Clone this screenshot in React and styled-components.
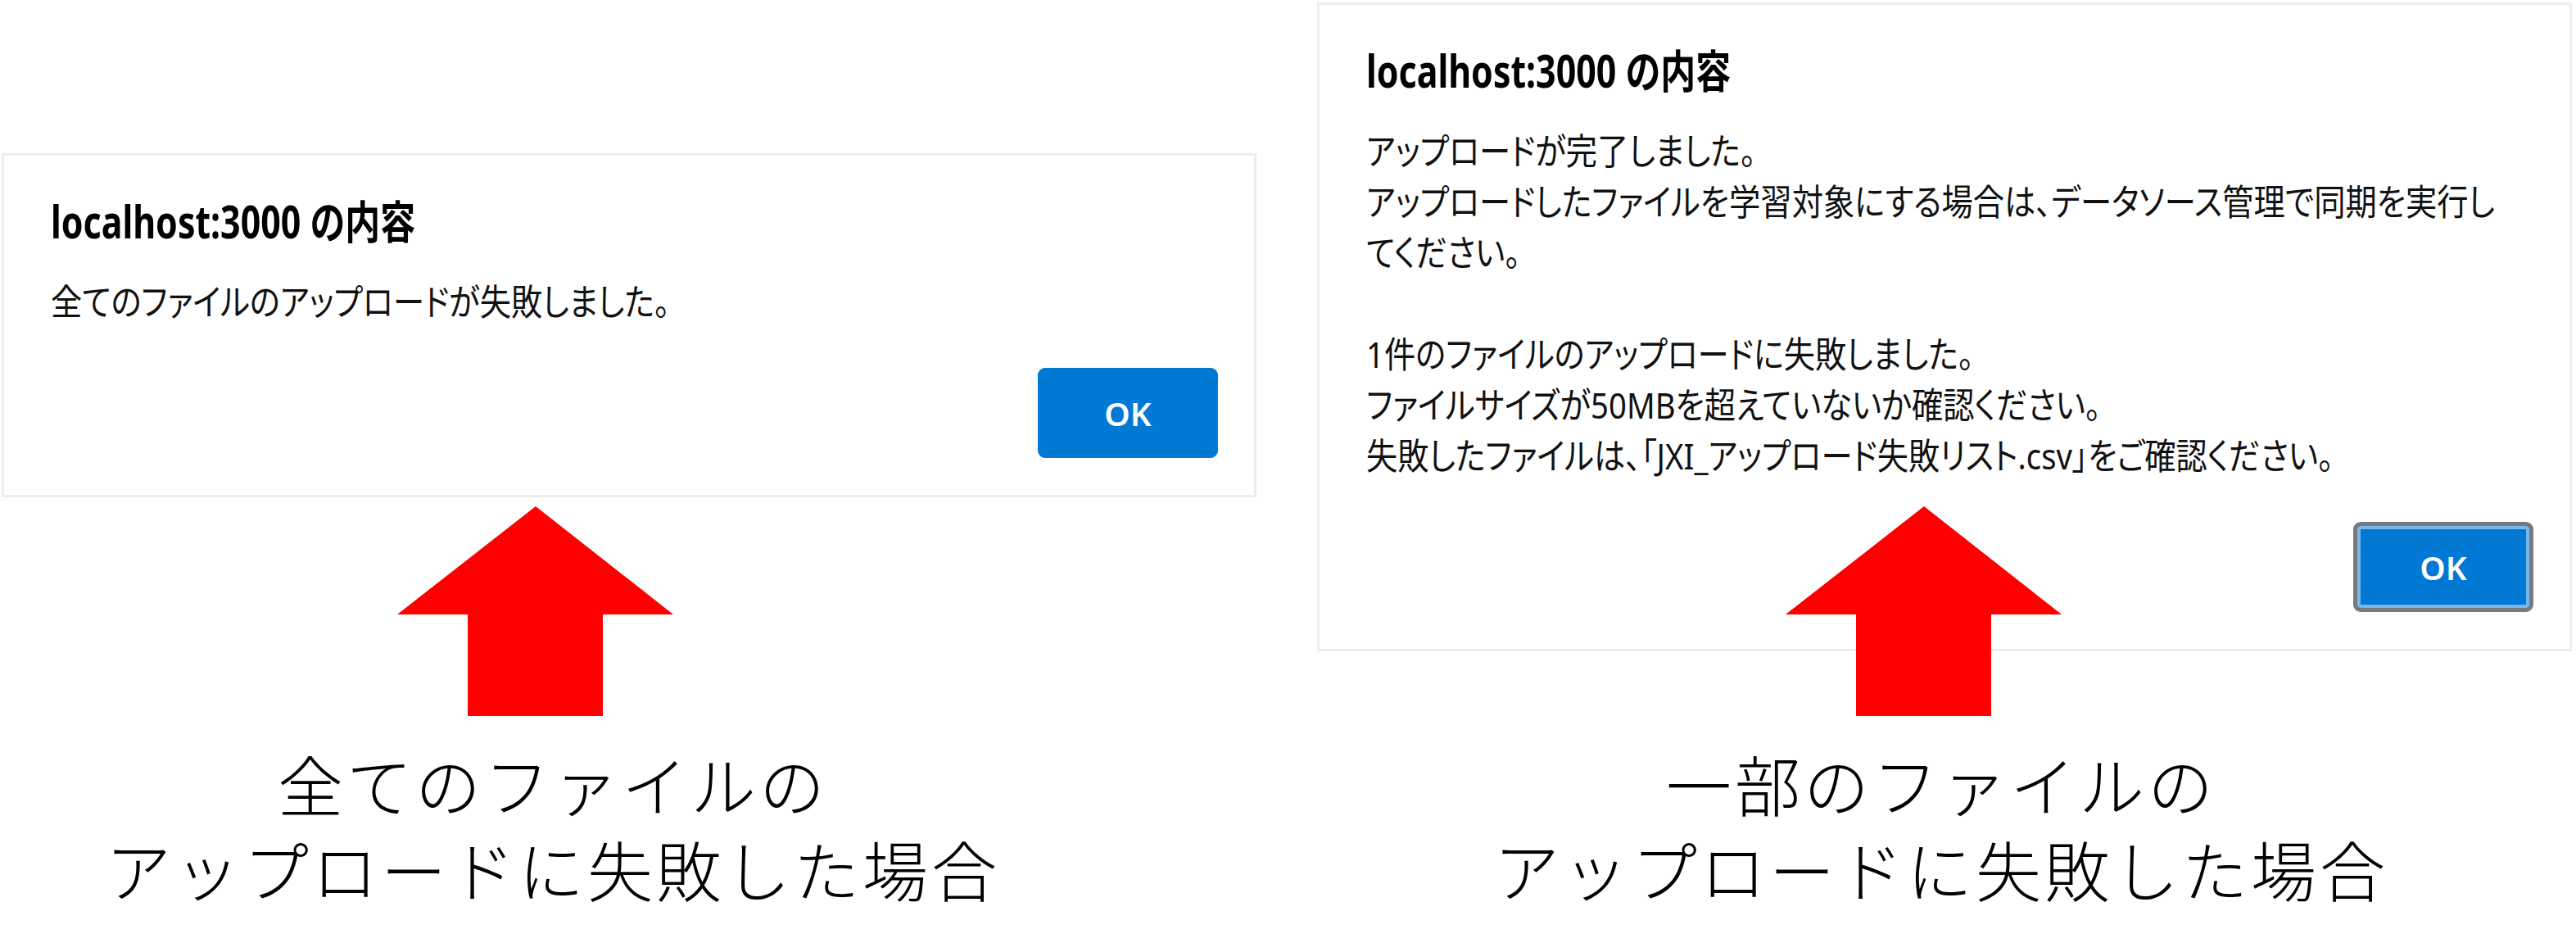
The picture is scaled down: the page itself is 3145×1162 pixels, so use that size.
import React from 'react';
import styled, { createGlobalStyle } from 'styled-components';

const GlobalStyle = createGlobalStyle`
  html, body { margin: 0; padding: 0; background: #ffffff; }
  body { font-family: "Noto Sans", "Noto Sans CJK JP", sans-serif; }
`;

const Page = styled.main`
  display: grid;
  grid-template-columns: 1532px 1532px;
  grid-template-rows: 618px auto;
  column-gap: 74px;
  padding-left: 2px;
  width: 3145px;
  box-sizing: border-box;
`;

const Dialog = styled.section`
  grid-column: ${(p) => p.$col};
  grid-row: ${(p) => (p.$span ? '1 / span 2' : '1')};
  align-self: start;
  margin-top: ${(p) => p.$top}px;
  box-sizing: border-box;
  border: 3px solid #ededed;
  background: #ffffff;
  padding: 44px 44px 45px 57px;
  display: flex;
  flex-direction: column;
`;

const Title = styled.h2`
  margin: 0;
  font-family: "Noto Sans", "Noto Sans CJK JP", sans-serif;
  font-size: 55px;
  font-weight: 700;
  line-height: 71px;
  color: #000000;
  white-space: nowrap;
  transform: scaleX(0.78);
  transform-origin: left center;
`;

const Message = styled.div`
  margin-top: 32px;
  display: flex;
  flex-direction: column;
`;

const Line = styled.div`
  font-family: "Noto Sans", "Noto Sans CJK JP", sans-serif;
  font-size: 44px;
  line-height: 62px;
  height: 62px;
  color: #111111;
  white-space: nowrap;
  font-feature-settings: "palt" 1;
  transform: scaleX(0.87);
  transform-origin: left center;
`;

const ButtonRow = styled.div`
  display: flex;
  justify-content: flex-end;
  margin-top: 50px;
`;

const OkButton = styled.button`
  width: 220px;
  height: 110px;
  box-sizing: border-box;
  border-radius: 9px;
  background: #0078d4;
  color: #ffffff;
  font-family: "Noto Sans", sans-serif;
  font-size: 40px;
  font-weight: 600;
  cursor: pointer;
  border: ${(p) => (p.$focused ? '5px solid #767a7e' : 'none')};
  box-shadow: ${(p) => (p.$focused ? 'inset 0 0 0 4px #78b6ee' : 'none')};
`;

const Annotation = styled.div`
  grid-column: ${(p) => p.$col};
  grid-row: 2;
  z-index: 1;
  width: 1300px;
  margin-left: ${(p) => p.$offset}px;
  display: flex;
  flex-direction: column;
  align-items: center;
`;

const ArrowSvg = styled.svg`
  display: block;
  width: 337px;
  height: 256px;
  margin-right: 44px;
`;

const Caption = styled.p`
  margin: 29px 0 0;
  font-family: "Noto Sans CJK JP", "Noto Sans", sans-serif;
  font-weight: 300;
  font-size: 80px;
  line-height: 104px;
  letter-spacing: 4px;
  color: #000000;
  text-align: center;
`;

const CaptionLine = styled.span`
  display: block;
  white-space: nowrap;
`;

const UpArrow = () => (
  <ArrowSvg viewBox="0 0 337 256" aria-hidden="true">
    <polygon points="169,0 337,132 251,132 251,256 86,256 86,132 0,132" fill="#ff0000" />
  </ArrowSvg>
);

const AlertDialog = ({ col, top, span, lines, focused }) => (
  <Dialog $col={col} $top={top} $span={span}>
    <Title>localhost:3000 の内容</Title>
    <Message>
      {lines.map((l, i) => (
        <Line key={i}>{l === '' ? '\u00A0' : l}</Line>
      ))}
    </Message>
    <ButtonRow>
      <OkButton $focused={focused}>OK</OkButton>
    </ButtonRow>
  </Dialog>
);

const leftLines = ['全てのファイルのアップロードが失敗しました。'];
const rightLines = [
  'アップロードが完了しました。',
  'アップロードしたファイルを学習対象にする場合は、データソース管理で同期を実行し',
  'てください。',
  '',
  '1件のファイルのアップロードに失敗しました。',
  'ファイルサイズが50MBを超えていないか確認ください。',
  '失敗したファイルは、「JXI_アップロード失敗リスト.csv」をご確認ください。',
];

export default function App() {
  return (
    <>
      <GlobalStyle />
      <Page>
        <AlertDialog col={1} top={187} lines={leftLines} />
        <AlertDialog col={2} top={3} span lines={rightLines} focused />
        <Annotation $col={1} $offset={23}>
          <UpArrow />
          <Caption>
            <CaptionLine>全てのファイルの</CaptionLine>
            <CaptionLine>アップロードに失敗した場合</CaptionLine>
          </Caption>
        </Annotation>
        <Annotation $col={2} $offset={112}>
          <UpArrow />
          <Caption>
            <CaptionLine>一部のファイルの</CaptionLine>
            <CaptionLine>アップロードに失敗した場合</CaptionLine>
          </Caption>
        </Annotation>
      </Page>
    </>
  );
}
